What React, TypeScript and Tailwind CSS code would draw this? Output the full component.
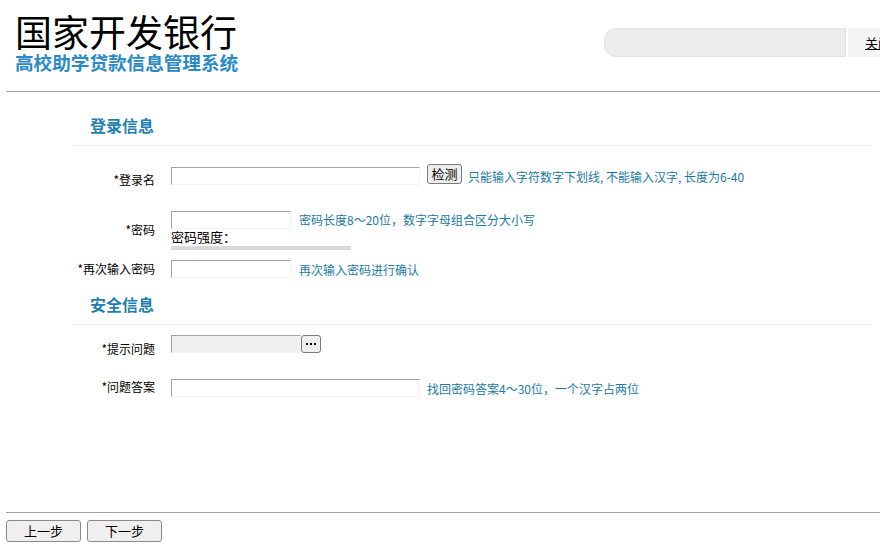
import React from "react";

const font = { fontFamily: '"Noto Sans CJK SC", "Noto Sans", sans-serif' };

function Field({ w, gray = false }: { w: string; gray?: boolean }) {
  return (
    <div
      className={`${w} h-[18px] border-t border-l border-t-[#a3a3a3] border-l-[#a3a3a3] border-r border-b border-r-[#f3f3f3] border-b-[#f3f3f3] ${gray ? "bg-[#efefef]" : "bg-white"}`}
    />
  );
}

function Label({ text, pt }: { text: string; pt: string }) {
  return (
    <div className={`w-[99px] shrink-0 text-right pr-[16px] text-[12px] leading-[14px] text-black ${pt}`}>
      {text}
    </div>
  );
}

function Hint({ text, cls = "" }: { text: string; cls?: string }) {
  return <div className={`text-[12px] leading-[14px] text-[#1c7aa0] whitespace-nowrap ${cls}`}>{text}</div>;
}

function Heading({ text, mt }: { text: string; mt: string }) {
  return (
    <div className={`${mt} border-b border-[#eeeeee] pb-[10px] pl-[18px]`}>
      <div className="text-[16px] leading-[20px] font-bold text-[#1f80b0]">{text}</div>
    </div>
  );
}

export default function App() {
  return (
    <div className="w-[880px] h-[548px] bg-white overflow-hidden flex flex-col" style={font}>
      <div className="ml-[6px] h-[92px] shrink-0 border-b border-[#a9a9a0] flex">
        <div className="w-[598px] shrink-0 pl-[9px] pt-[12px]">
          <div className="text-[37px] leading-[38px] text-black">国家开发银行</div>
          <div className="mt-[2px] text-[18.6px] leading-[20px] font-bold text-[#2a8ac6]">高校助学贷款信息管理系统</div>
        </div>
        <div className="shrink-0 pt-[28px] flex">
          <div className="w-[242px] h-[29px] bg-[#ececec] rounded-l-[12px] border border-[#e2e2e2]" />
          <div className="w-[2px] h-[29px] bg-white" />
          <div className="h-[29px] bg-[#f4f4f4] pl-[17px] pr-[10px] flex items-center">
            <span className="text-[13px] underline text-black whitespace-nowrap">关闭窗口</span>
          </div>
        </div>
      </div>

      <div className="ml-[72px] w-[800px] flex flex-col">
        <Heading text="登录信息" mt="mt-[23px]" />

        <div className="mt-[21px] flex items-start">
          <Label text="*登录名" pt="pt-[6px]" />
          <Field w="w-[249px]" />
          <button className="ml-[7px] -mt-[3px] w-[35px] h-[20px] bg-[#eeeeee] border border-[#7a7a7a] rounded-[3px] text-[13px] leading-[18px] text-black">
            检测
          </button>
          <Hint text="只能输入字符数字下划线, 不能输入汉字, 长度为6-40" cls="ml-[6px] pt-[3px]" />
        </div>

        <div className="mt-[24px] flex items-start">
          <Label text="*密码" pt="pt-[12px]" />
          <div className="flex flex-col">
            <div className="flex items-start">
              <Field w="w-[120px]" />
              <Hint text="密码长度8～20位，数字字母组合区分大小写" cls="ml-[8px] pt-[2px]" />
            </div>
            <div className="text-[13px] leading-[15px] text-black">密码强度：</div>
            <div className="mt-[2px] w-[180px] h-[4px] bg-[#d9d9d9]" />
          </div>
        </div>

        <div className="mt-[10px] flex items-start">
          <Label text="*再次输入密码" pt="pt-[2px]" />
          <Field w="w-[120px]" />
          <Hint text="再次输入密码进行确认" cls="ml-[8px] pt-[3px]" />
        </div>

        <Heading text="安全信息" mt="mt-[16px]" />

        <div className="mt-[10px] flex items-start">
          <Label text="*提示问题" pt="pt-[7px]" />
          <Field w="w-[130px]" gray />
          <button className="w-[20px] h-[18px] bg-[#eeeeee] border border-[#7a7a7a] rounded-[3px] flex items-center justify-center gap-[2px]">
            <span className="w-[2px] h-[2px] bg-black" />
            <span className="w-[2px] h-[2px] bg-black" />
            <span className="w-[2px] h-[2px] bg-black" />
          </button>
        </div>

        <div className="mt-[23px] flex items-start">
          <Label text="*问题答案" pt="pt-[1px]" />
          <Field w="w-[249px]" />
          <Hint text="找回密码答案4～30位，一个汉字占两位" cls="ml-[7px] pt-[3px]" />
        </div>
      </div>

      <div className="flex-1" />

      <div className="ml-[6px] shrink-0 border-t border-[#a0a0a0] pt-[7px] pb-[6px] flex gap-[6px]">
        <button className="w-[75px] h-[22px] bg-[#efefef] border border-[#8a8a8a] rounded-[3px] text-[13px] leading-[20px] text-black">
          上一步
        </button>
        <button className="w-[75px] h-[22px] bg-[#efefef] border border-[#8a8a8a] rounded-[3px] text-[13px] leading-[20px] text-black">
          下一步
        </button>
      </div>
    </div>
  );
}
